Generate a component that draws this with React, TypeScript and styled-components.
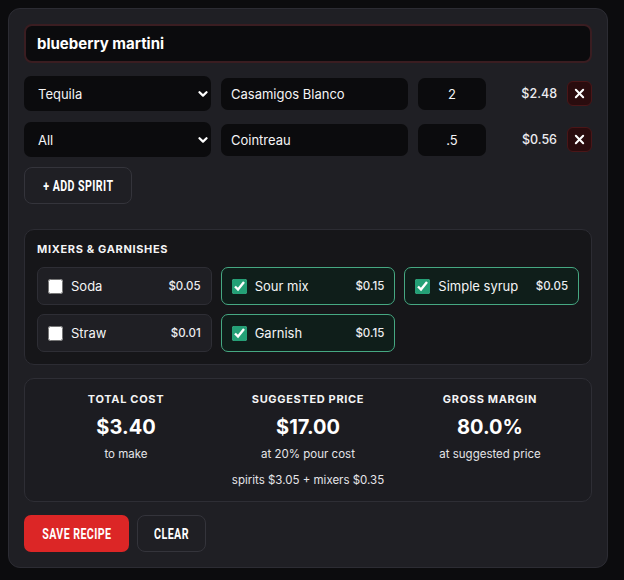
import React, { useState } from "react";
import styled, { createGlobalStyle, css } from "styled-components";

const GlobalStyle = createGlobalStyle`
  * { box-sizing: border-box; }
  html, body { background: #0c0c0e; }
  body {
    margin: 8px;
    font-family: Inter, "Noto Sans", "Liberation Sans", sans-serif;
    color: #f4f4f5;
  }
`;

const Card = styled.div`
  width: 600px;
  background: #1f1f24;
  border: 1px solid #2c2c33;
  border-radius: 12px;
  padding: 15px 15px 15px;
  display: flex;
  flex-direction: column;
`;

const NameInput = styled.input`
  height: 39px;
  width: 100%;
  background: #0b0b0d;
  border: 2px solid #3a1d21;
  border-radius: 8px;
  padding: 0 11px;
  color: #fff;
  font-family: inherit;
  font-size: 15px;
  font-weight: 700;
  outline: none;
`;

const SpiritList = styled.div`
  display: flex;
  flex-direction: column;
  gap: 11px;
  margin-top: 13px;
`;

const SpiritRow = styled.div`
  display: grid;
  grid-template-columns: 187px 187px 68px 1fr 25px;
  gap: 10px;
  align-items: center;
`;

const fieldBase = css`
  background: #0b0b0d;
  border: none;
  border-radius: 7px;
  color: #f4f4f5;
  font-family: inherit;
  font-size: 13px;
  outline: none;
`;

const Select = styled.select`
  ${fieldBase};
  height: 35px;
  padding: 0 26px 0 14px;
  appearance: none;
  background-image: url("data:image/svg+xml,%3Csvg xmlns='http://www.w3.org/2000/svg' width='10' height='10' viewBox='0 0 10 10' fill='none' stroke='white' stroke-width='2.2' stroke-linecap='round' stroke-linejoin='round'%3E%3Cpath d='M1.5 3.2l3.5 3.4 3.5-3.4'/%3E%3C/svg%3E");
  background-repeat: no-repeat;
  background-position: right 3px center;
`;

const TextField = styled.input<{ $center?: boolean }>`
  ${fieldBase};
  height: 32px;
  width: 100%;
  padding: 0 10px;
  text-align: ${(p) => (p.$center ? "center" : "left")};
`;

const Price = styled.span`
  text-align: right;
  font-size: 12.5px;
  font-weight: 500;
  color: #ececf0;
`;

const RemoveButton = styled.button`
  width: 25px;
  height: 25px;
  padding: 0;
  display: flex;
  align-items: center;
  justify-content: center;
  background: #2a0c0e;
  border: 1px solid #4a1618;
  border-radius: 6px;
  color: #fff;
  cursor: pointer;
`;

/* Narrow display caption used on the action buttons */
const Caption = styled.span`
  display: inline-block;
  font-family: Roboto, "Liberation Sans", sans-serif;
  font-weight: 700;
  font-size: 15px;
  text-transform: uppercase;
  letter-spacing: 0.04em;
  white-space: nowrap;
  transform: scaleX(0.71);
  color: #fff;
`;

const buttonBase = css`
  height: 37px;
  padding: 0;
  display: flex;
  align-items: center;
  justify-content: center;
  cursor: pointer;
`;

const GhostButton = styled.button<{ $width: number }>`
  ${buttonBase};
  width: ${(p) => p.$width}px;
  background: #1f1f24;
  border: 1px solid #34343b;
  border-radius: 8px;
`;

const PrimaryButton = styled.button`
  ${buttonBase};
  width: 105px;
  background: #dc2626;
  border: none;
  border-radius: 7px;
`;

const AddRow = styled.div`
  margin-top: 10px;
`;

const MixerPanel = styled.section`
  margin-top: 25px;
  background: #161619;
  border: 1px solid #2c2c33;
  border-radius: 10px;
  padding: 12px 12px 12px;
`;

const SectionTitle = styled.h3`
  margin: 0 0 11px;
  font-size: 11px;
  font-weight: 700;
  letter-spacing: 0.06em;
  text-transform: uppercase;
  color: #f4f4f5;
`;

const MixerGrid = styled.div`
  display: grid;
  grid-template-columns: repeat(3, 1fr);
  gap: 9px;
`;

const MixerItem = styled.label<{ $on: boolean }>`
  height: 38px;
  display: flex;
  align-items: center;
  padding: 0 10px 0 10px;
  border-radius: 7px;
  border: 1px solid ${(p) => (p.$on ? "#46a882" : "#2e2e35")};
  background: ${(p) => (p.$on ? "#0f1e1a" : "#1f1f24")};
  cursor: pointer;
`;

const Check = styled.input`
  width: 15px;
  height: 15px;
  margin: 0 8px 0 0;
  flex: none;
  accent-color: #24a076;
`;

const MixerName = styled.span`
  flex: 1;
  white-space: nowrap;
  font-size: 13px;
  color: #f4f4f5;
`;

const MixerPrice = styled.span`
  font-size: 11.5px;
  font-weight: 500;
  white-space: nowrap;
  color: #ececf0;
`;

const Summary = styled.section`
  margin-top: 13px;
  border: 1px solid #2e2e35;
  border-radius: 10px;
  background: #1c1c21;
  padding: 13px 10px 14px;
  display: grid;
  grid-template-columns: repeat(3, 1fr);
`;

const Stat = styled.div`
  display: flex;
  flex-direction: column;
  align-items: center;
  text-align: center;
`;

const StatLabel = styled.div`
  font-size: 11px;
  font-weight: 700;
  letter-spacing: 0.06em;
  text-transform: uppercase;
  color: #f4f4f5;
`;

const StatValue = styled.div`
  margin-top: 9px;
  font-size: 20px;
  font-weight: 700;
  color: #fff;
`;

const StatNote = styled.div`
  margin-top: 8px;
  font-size: 11.5px;
  color: #e4e4e8;
`;

const StatExtra = styled.div`
  margin-top: 12px;
  font-size: 11.5px;
  color: #e4e4e8;
`;

const Actions = styled.div`
  margin-top: 13px;
  display: flex;
  gap: 8px;
`;

const XIcon = () => (
  <svg width="11" height="11" viewBox="0 0 12 12" fill="none" stroke="#fff" strokeWidth="2.2" strokeLinecap="round">
    <path d="M2 2l8 8M10 2l-8 8" />
  </svg>
);

type Spirit = { category: string; name: string; qty: string; price: string };

const spirits: Spirit[] = [
  { category: "Tequila", name: "Casamigos Blanco", qty: "2", price: "$2.48" },
  { category: "All", name: "Cointreau", qty: ".5", price: "$0.56" },
];

const categories = ["All", "Tequila", "Vodka", "Gin", "Rum", "Whiskey"];

type Mixer = { name: string; price: string; on: boolean };

const initialMixers: Mixer[] = [
  { name: "Soda", price: "$0.05", on: false },
  { name: "Sour mix", price: "$0.15", on: true },
  { name: "Simple syrup", price: "$0.05", on: true },
  { name: "Straw", price: "$0.01", on: false },
  { name: "Garnish", price: "$0.15", on: true },
];

export default function App() {
  const [mixers, setMixers] = useState(initialMixers);

  const toggle = (i: number) =>
    setMixers((m) => m.map((x, j) => (j === i ? { ...x, on: !x.on } : x)));

  return (
    <>
      <GlobalStyle />
      <Card>
        <NameInput defaultValue="blueberry martini" />

        <SpiritList>
          {spirits.map((s, i) => (
            <SpiritRow key={i}>
              <Select defaultValue={s.category}>
                {categories.map((c) => (
                  <option key={c}>{c}</option>
                ))}
              </Select>
              <TextField defaultValue={s.name} />
              <TextField $center defaultValue={s.qty} />
              <Price>{s.price}</Price>
              <RemoveButton aria-label="Remove">
                <XIcon />
              </RemoveButton>
            </SpiritRow>
          ))}
        </SpiritList>

        <AddRow>
          <GhostButton $width={108}>
            <Caption>+ Add spirit</Caption>
          </GhostButton>
        </AddRow>

        <MixerPanel>
          <SectionTitle>Mixers &amp; Garnishes</SectionTitle>
          <MixerGrid>
            {mixers.map((m, i) => (
              <MixerItem key={m.name} $on={m.on}>
                <Check type="checkbox" checked={m.on} onChange={() => toggle(i)} />
                <MixerName>{m.name}</MixerName>
                <MixerPrice>{m.price}</MixerPrice>
              </MixerItem>
            ))}
          </MixerGrid>
        </MixerPanel>

        <Summary>
          <Stat>
            <StatLabel>Total cost</StatLabel>
            <StatValue>$3.40</StatValue>
            <StatNote>to make</StatNote>
          </Stat>
          <Stat>
            <StatLabel>Suggested price</StatLabel>
            <StatValue>$17.00</StatValue>
            <StatNote>at 20% pour cost</StatNote>
            <StatExtra>spirits $3.05 + mixers $0.35</StatExtra>
          </Stat>
          <Stat>
            <StatLabel>Gross margin</StatLabel>
            <StatValue>80.0%</StatValue>
            <StatNote>at suggested price</StatNote>
          </Stat>
        </Summary>

        <Actions>
          <PrimaryButton>
            <Caption>Save recipe</Caption>
          </PrimaryButton>
          <GhostButton $width={69}>
            <Caption>Clear</Caption>
          </GhostButton>
        </Actions>
      </Card>
    </>
  );
}
